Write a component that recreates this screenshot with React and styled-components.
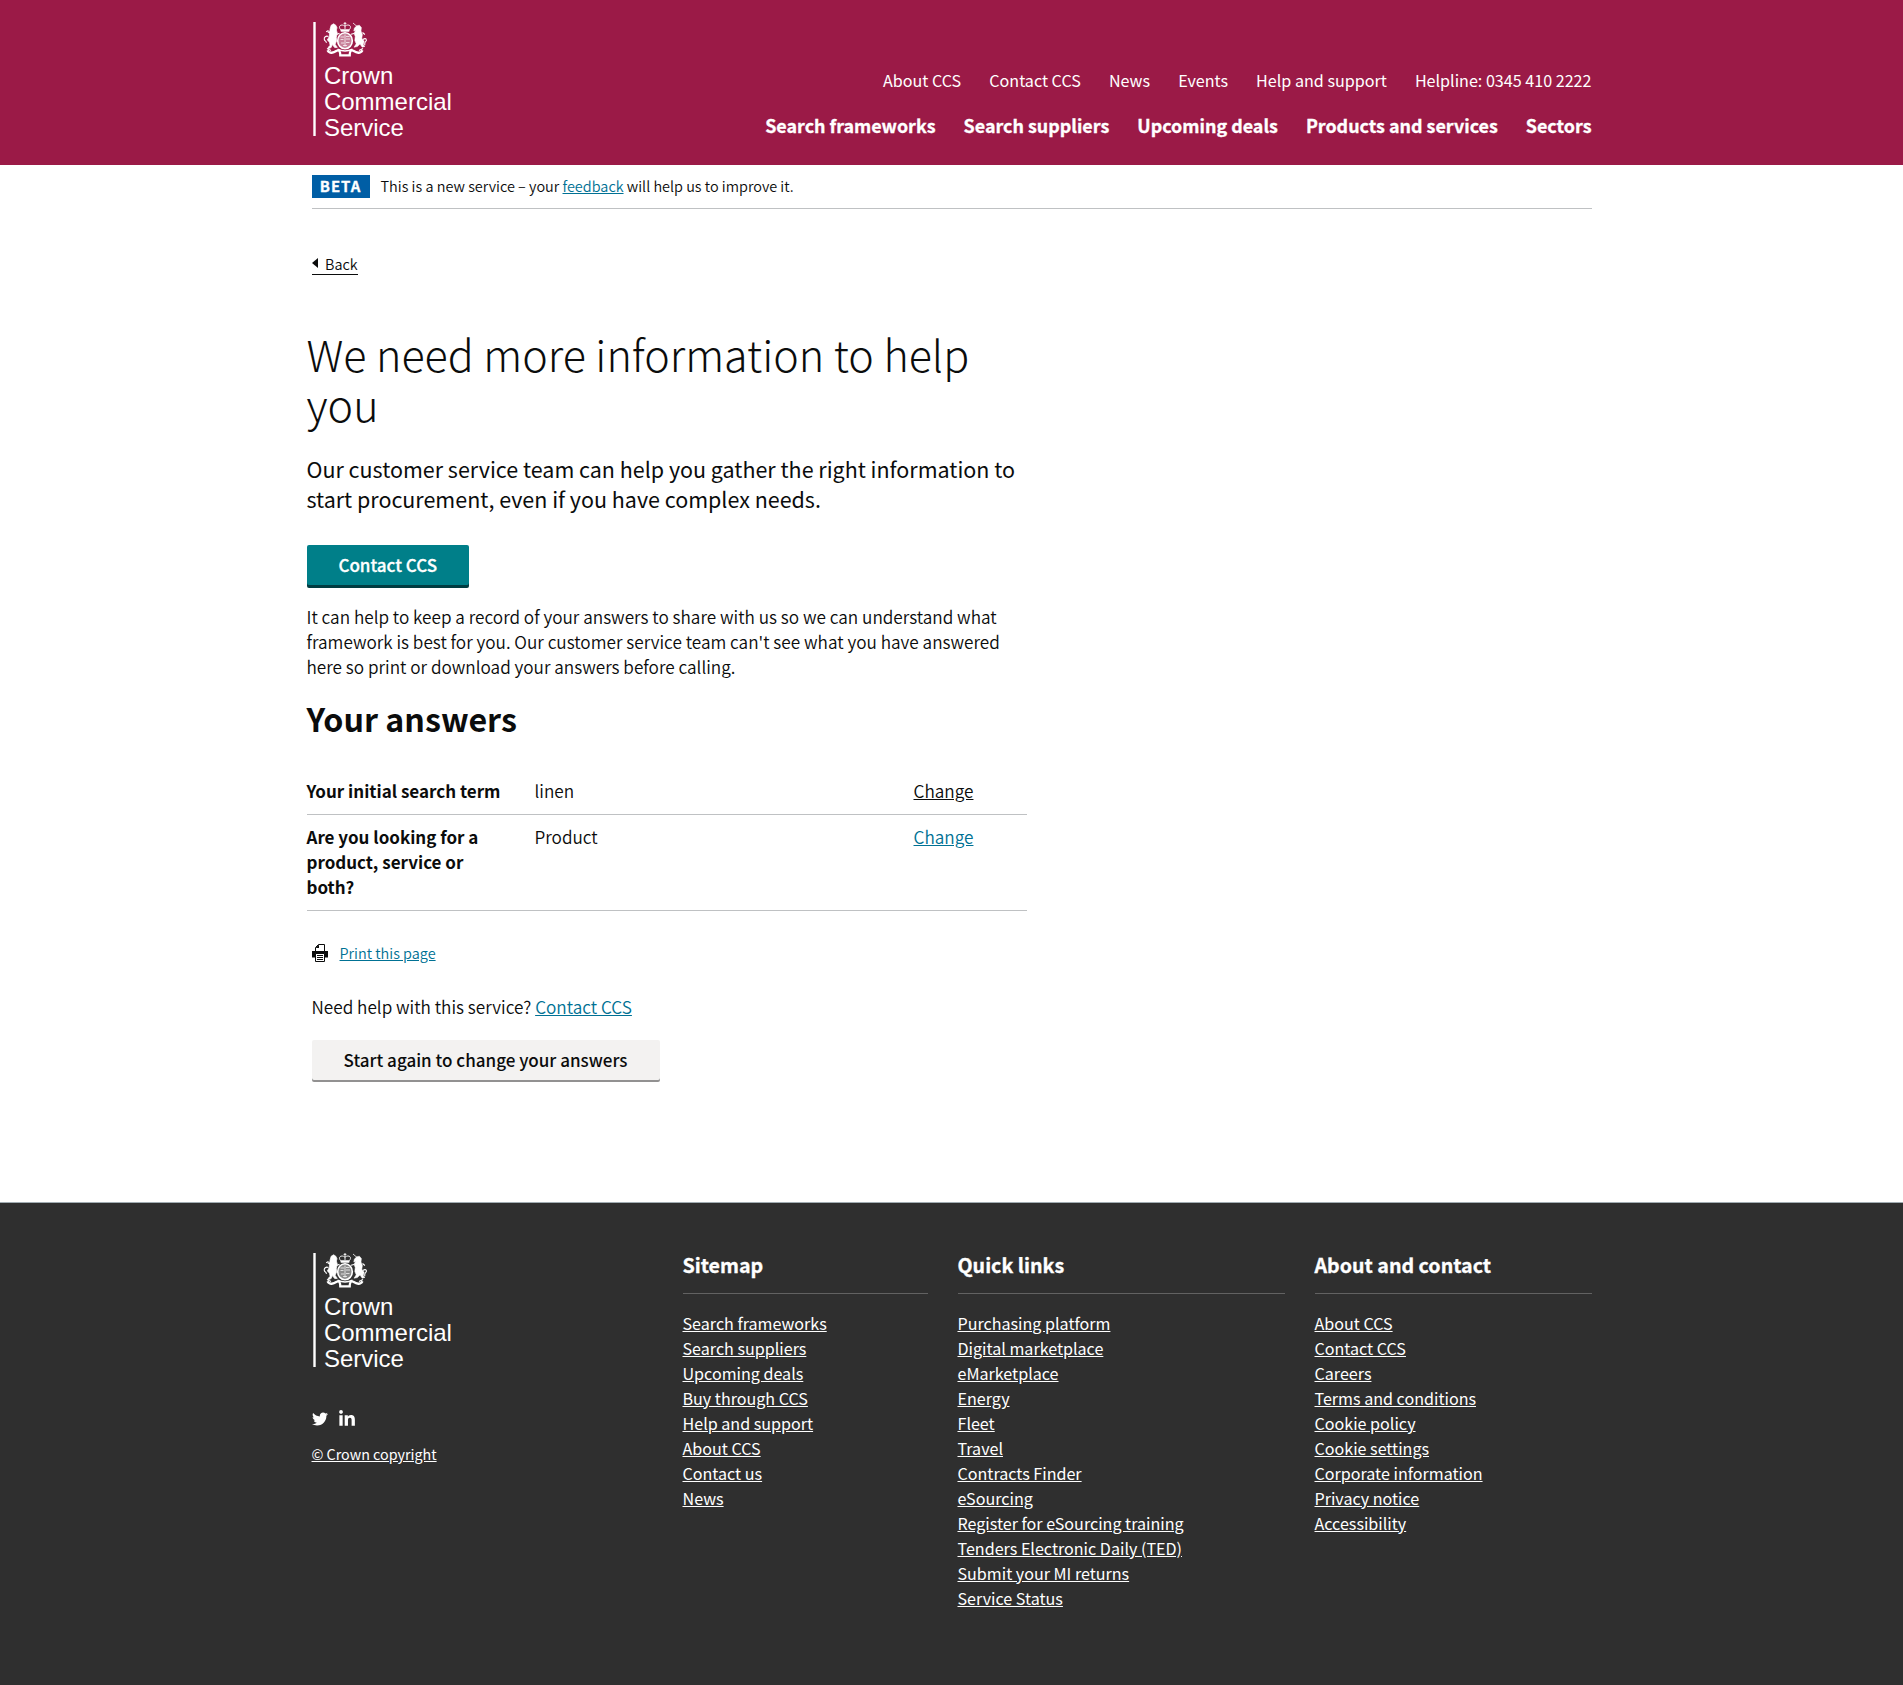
import React from 'react';
import styled, { createGlobalStyle, css } from 'styled-components';
import { FaTwitter, FaLinkedinIn } from 'react-icons/fa';

const GlobalStyle = createGlobalStyle`
  * { box-sizing: border-box; }
  body {
    margin: 0;
    background: #fff;
    color: #0b0c0c;
    font-family: "Noto Sans CJK SC", "Noto Sans", sans-serif;
    font-size: 17.18px;
    font-weight: 350;
    line-height: 25px;
  }
  a { text-decoration-thickness: 1px; text-underline-offset: 1px; }
`;

const Container = styled.div`
  width: 1280px;
  margin: 0 auto;
`;

const Link = styled.a`
  color: ${(p) => (p.$visited ? '#0b0c0c' : '#007194')};
  text-decoration: underline;
`;

/* Header */

const Header = styled.header`
  height: 165px;
  background: #9b1a47;
  color: #fff;
`;

const HeaderInner = styled(Container)`
  display: flex;
  justify-content: space-between;
  align-items: flex-start;
  padding-top: 22px;
`;

const HeaderNav = styled.nav`
  display: flex;
  flex-direction: column;
  align-items: flex-end;
  gap: 21px;
  padding-top: 46px;
`;

const NavRow = styled.ul`
  display: flex;
  margin: 0;
  padding: 0;
  list-style: none;
  white-space: nowrap;
  line-height: 24px;
  ${(p) =>
    p.$primary
      ? css`
          gap: 28px;
          font-size: 17.9px;
          font-weight: 700;
          -webkit-text-stroke: 0.3px #fff;
        `
      : css`
          gap: 28.1px;
          font-size: 16.12px;
          font-weight: 400;
        `}
`;

const NavLink = styled.a`
  color: #fff;
  text-decoration: none;
`;

/* Logo */

const LogoSvg = styled.svg`
  display: block;
  width: 150px;
  height: 122px;
  margin-left: 1.5px;
  flex: none;
`;

const LogoText = styled.text`
  font-family: "Liberation Sans", Arial, sans-serif;
  font-size: 24px;
  fill: #fff;
`;

function Logo() {
  return (
    <LogoSvg viewBox="0 0 150 122" role="img" aria-label="Crown Commercial Service">
      <rect x="0.3" y="0" width="2.4" height="114" fill="#fff" />
      {/* crown */}
      <g fill="none" stroke="#fff" strokeWidth="0.9">
        <path d="M27.5 7.5C24.5 3.5 29 1.6 32 4.2C35 1.6 39.5 3.5 36.5 7.5" />
        <path d="M32 0v7M30.6 1.4h2.8" />
      </g>
      <path d="M27.2 7.2h9.6l-.6 2.6h-8.4z" fill="#fff" />
      {/* shield */}
      <ellipse cx="32" cy="18.7" rx="7.3" ry="8" fill="#fff" fillOpacity="0.45" stroke="#fff" strokeWidth="1.6" />
      <path d="M27.5 15h3.6M33 14.5h3.6M27.5 17.5h3M33 17h4M28 21h3.2M33 20.5h3.5M30 23.500h4M32 12.500v12" stroke="#fff" strokeWidth="0.7" />
      {/* lion */}
      <path
        d="M18.2 3.2l2.400-1.400 2.200 1.400 1.200 2.600-.6 2.200.9 3.200-1 4 .4 3.600-1.600 3.400 2.200 3.200-2.600.2-2.400-3-1.200 3-3 1.200.2-1.800 1.800-1.400-.6-3.400-2.200-2.200 2-3.400.2-3.200-1.800-1.400 2.200-.8.2-2.400z"
        fill="#fff"
        stroke="#fff"
        strokeWidth="0.7"
      />
      <path d="M15.500 14.500c-2.600-1-4.600.6-4.200 2.800s2.400 1.600 2 3.600M15.500 8.500l-2.300 1.300M23.500 12.500l3-1.200" fill="none" stroke="#fff" strokeWidth="1.100" />
      {/* unicorn */}
      <path d="M40 1l4.200 3.600" stroke="#fff" strokeWidth="0.8" />
      <path
        d="M41.400 6l2.400-2.200 2.600-.6 2 2.400-.4 3.400 1.400 3.600-.6 3.600 2.400 3-1 3.600 1.800 1.600-2.800.8-2.200-3.200-2.600 2.600-3.400.6 2.200-3.400-1.400-3.400.4-4-1.200-3.200 1.600-2.600-1.800.4z"
        fill="#fff"
        stroke="#fff"
        strokeWidth="0.5"
      />
      <path d="M49.500 10.500l2.400 2M50 17.500c3.200-2.400 4.200.6 2.600 2.200s-.4 2.400-1 3.400M41 11.500l-3 .8" fill="none" stroke="#fff" strokeWidth="1.100" />
      {/* ribbon */}
      <path
        d="M14.500 28.200c2.200 4 6 2.600 9.200.6 3-1.600 3.600 1.800 3.600 4.600h9.400c0-2.800.6-6.200 3.600-4.600 3.200 2 7 3.400 9.200-.6"
        fill="none"
        stroke="#fff"
        strokeWidth="2.300"
      />
      <path d="M14 26.500l4 2M50 26.500l-4 2M24.500 27.200c5 2.400 10 2.400 15 0" fill="none" stroke="#fff" strokeWidth="1.300" />
      <LogoText x="10.900" y="61.700">Crown</LogoText>
      <LogoText x="10.900" y="87.500">Commercial</LogoText>
      <LogoText x="10.900" y="113.500">Service</LogoText>
    </LogoSvg>
  );
}

/* Phase banner */

const PhaseBanner = styled.div`
  display: flex;
  align-items: center;
  padding: 10px 0;
  border-bottom: 1px solid #bfc1c3;
  font-size: 14.46px;
`;

const PhaseTag = styled.strong`
  width: 58px;
  height: 23px;
  margin-right: 11px;
  background: #005ea5;
  color: #fff;
  text-align: center;
  font-size: 14.9px;
  font-weight: 700;
  line-height: 22px;
  letter-spacing: 1px;
  -webkit-text-stroke: 0.3px #fff;
`;

const PhaseText = styled.span`
  line-height: 22px;
  height: 23px;
`;

/* Main */

const Main = styled(Container)`
  height: 993px;
  display: flex;
  flex-direction: column;
  align-items: flex-start;
`;

const BackLink = styled.a`
  display: flex;
  align-items: center;
  margin-top: 45px;
  height: 21px;
  border-bottom: 1px solid #0b0c0c;
  font-size: 14.46px;
  line-height: 20px;
  color: #0b0c0c;
  text-decoration: none;
`;

const BackArrow = styled.span`
  width: 0;
  height: 0;
  margin: 0 7.5px 2px 0;
  border: 5px solid transparent;
  border-left: 0;
  border-right: 6px solid #0b0c0c;
`;

const Content = styled.div`
  width: 720px;
  margin: 53px 0 0 -5px;
`;

const Title = styled.h1`
  margin: 0 0 26px;
  font-size: 43.03px;
  font-weight: 300;
  line-height: 50px;
`;

const Lead = styled.p`
  margin: 0 0 31px;
  font-size: 21.48px;
  font-weight: 400;
  line-height: 30px;
`;

const Button = styled.button`
  display: block;
  width: ${(p) => p.$width}px;
  height: 40px;
  padding: 0;
  border: 0;
  border-radius: 2px;
  font-family: inherit;
  font-size: 17.05px;
  font-weight: 500;
  line-height: 40px;
  ${(p) =>
    p.$secondary
      ? css`
          background: #f3f2f1;
          color: #0b0c0c;
          box-shadow: 0 2px 0 #929191;
        `
      : css`
          background: #007f89;
          color: #fff;
          box-shadow: 0 3px 0 #003c41;
          -webkit-text-stroke: 0.3px #fff;
        `}
`;

const Paragraph = styled.p`
  margin: 19px 0;
`;

const SectionTitle = styled.h2`
  margin: 0 0 31px;
  font-size: 32.2px;
  font-weight: 700;
  line-height: 40px;
`;

const Summary = styled.dl`
  margin: 0;
`;

const SummaryRow = styled.div`
  display: grid;
  grid-template-columns: 228px 379px 1fr;
  padding: 9px 0 11px;
  border-bottom: 1px solid #bfc1c3;
`;

const Key = styled.dt`
  padding-right: 30px;
  font-size: 17px;
  font-weight: 700;
`;

const Value = styled.dd`
  margin: 0;
`;

const PrintRow = styled.div`
  display: flex;
  align-items: center;
  gap: 12px;
  height: 20px;
  margin-top: 32px;
  font-size: 14.46px;
  line-height: 20px;
`;

const PrintSvg = styled.svg`
  width: 16px;
  height: 18px;
`;

const HelpText = styled.p`
  margin: 31px 0 21px;
`;

/* Footer */

const Footer = styled.footer`
  height: 483px;
  border-top: 1px solid #a1acb2;
  background: #2f2f2f;
  color: #fff;
  font-weight: 400;
`;

const FooterInner = styled(Container)`
  display: grid;
  grid-template-columns: 341px 245px 327px 277px;
  column-gap: 30px;
  padding-top: 49px;
`;

const Brand = styled.div`
  padding-top: 1px;
`;

const Social = styled.div`
  display: flex;
  align-items: center;
  gap: 10px;
  height: 20px;
  margin: 34px 0 11px;
`;

const TwitterIcon = styled(FaTwitter)`
  width: 16px;
  height: 16px;
`;

const LinkedInIcon = styled(FaLinkedinIn)`
  width: 18px;
  height: 18px;
`;

const FooterLink = styled.a`
  color: #fff;
  font-size: ${(p) => (p.$small ? '14.3px' : '16.1px')};
  text-decoration: underline;
`;

const FooterTitle = styled.h3`
  margin: 0 0 17px;
  padding-bottom: 16px;
  border-bottom: 1px solid #626262;
  font-size: 19.65px;
  font-weight: 700;
  line-height: 25px;
  -webkit-text-stroke: 0.3px #fff;
`;

const FooterList = styled.ul`
  margin: 0;
  padding: 0;
  list-style: none;

  li {
    height: 25px;
    font-size: 16.1px;
  }
`;

const topLinks = ['About CCS', 'Contact CCS', 'News', 'Events', 'Help and support', 'Helpline: 0345 410 2222'];
const mainLinks = ['Search frameworks', 'Search suppliers', 'Upcoming deals', 'Products and services', 'Sectors'];

const answers = [
  { question: 'Your initial search term', answer: 'linen', visited: true },
  { question: 'Are you looking for a product, service or both?', answer: 'Product', visited: false },
];

const footerColumns = [
  {
    title: 'Sitemap',
    links: ['Search frameworks', 'Search suppliers', 'Upcoming deals', 'Buy through CCS', 'Help and support', 'About CCS', 'Contact us', 'News'],
  },
  {
    title: 'Quick links',
    links: [
      'Purchasing platform', 'Digital marketplace', 'eMarketplace', 'Energy', 'Fleet', 'Travel', 'Contracts Finder', 'eSourcing',
      'Register for eSourcing training', 'Tenders Electronic Daily (TED)', 'Submit your MI returns', 'Service Status',
    ],
  },
  {
    title: 'About and contact',
    links: [
      'About CCS', 'Contact CCS', 'Careers', 'Terms and conditions', 'Cookie policy', 'Cookie settings', 'Corporate information',
      'Privacy notice', 'Accessibility',
    ],
  },
];

function NavList({ items, primary }) {
  return (
    <NavRow $primary={primary}>
      {items.map((item) => (
        <li key={item}>
          <NavLink href="#">{item}</NavLink>
        </li>
      ))}
    </NavRow>
  );
}

function PrintIcon() {
  return (
    <PrintSvg viewBox="0 0 16 18" aria-hidden="true">
      <path d="M3.500 7V3.500L6.500.5h6V7" fill="#fff" stroke="#0b0c0c" />
      <path d="M3.500 4L7 .5V4z" fill="#0b0c0c" />
      <path d="M0 7h16v6.500H0z" fill="#0b0c0c" />
      <path d="M3.500 9.500h9v8h-9z" fill="#fff" stroke="#0b0c0c" />
      <path d="M5 11.500h6M5 13.500h6M5 15.500h6" stroke="#0b0c0c" strokeWidth="1" />
    </PrintSvg>
  );
}

export default function App() {
  return (
    <>
      <GlobalStyle />
      <Header>
        <HeaderInner>
          <Logo />
          <HeaderNav>
            <NavList items={topLinks} />
            <NavList items={mainLinks} primary />
          </HeaderNav>
        </HeaderInner>
      </Header>

      <Container>
        <PhaseBanner>
          <PhaseTag>BETA</PhaseTag>
          <PhaseText>
            This is a new service – your <Link href="#">feedback</Link> will help us to improve it.
          </PhaseText>
        </PhaseBanner>
      </Container>

      <Main as="main">
        <BackLink href="#">
          <BackArrow />
          Back
        </BackLink>

        <Content>
          <Title>We need more information to help you</Title>
          <Lead>
            Our customer service team can help you gather the right information to start procurement, even if you have
            complex needs.
          </Lead>
          <Button $width={162.5}>Contact CCS</Button>
          <Paragraph>
            It can help to keep a record of your answers to share with us so we can understand what framework is best
            for you. Our customer service team can't see what you have answered here so print or download your answers
            before calling.
          </Paragraph>
          <SectionTitle>Your answers</SectionTitle>
          <Summary>
            {answers.map((row) => (
              <SummaryRow key={row.question}>
                <Key>{row.question}</Key>
                <Value>{row.answer}</Value>
                <Value>
                  <Link href="#" $visited={row.visited}>
                    Change
                  </Link>
                </Value>
              </SummaryRow>
            ))}
          </Summary>
        </Content>

        <PrintRow>
          <PrintIcon />
          <Link href="#">Print this page</Link>
        </PrintRow>
        <HelpText>
          Need help with this service? <Link href="#">Contact CCS</Link>
        </HelpText>
        <Button $width={348} $secondary>
          Start again to change your answers
        </Button>
      </Main>

      <Footer>
        <FooterInner>
          <Brand>
            <Logo />
            <Social>
              <TwitterIcon />
              <LinkedInIcon />
            </Social>
            <FooterLink href="#" $small>
              © Crown copyright
            </FooterLink>
          </Brand>
          {footerColumns.map((column) => (
            <div key={column.title}>
              <FooterTitle>{column.title}</FooterTitle>
              <FooterList>
                {column.links.map((label) => (
                  <li key={label}>
                    <FooterLink href="#">{label}</FooterLink>
                  </li>
                ))}
              </FooterList>
            </div>
          ))}
        </FooterInner>
      </Footer>
    </>
  );
}
